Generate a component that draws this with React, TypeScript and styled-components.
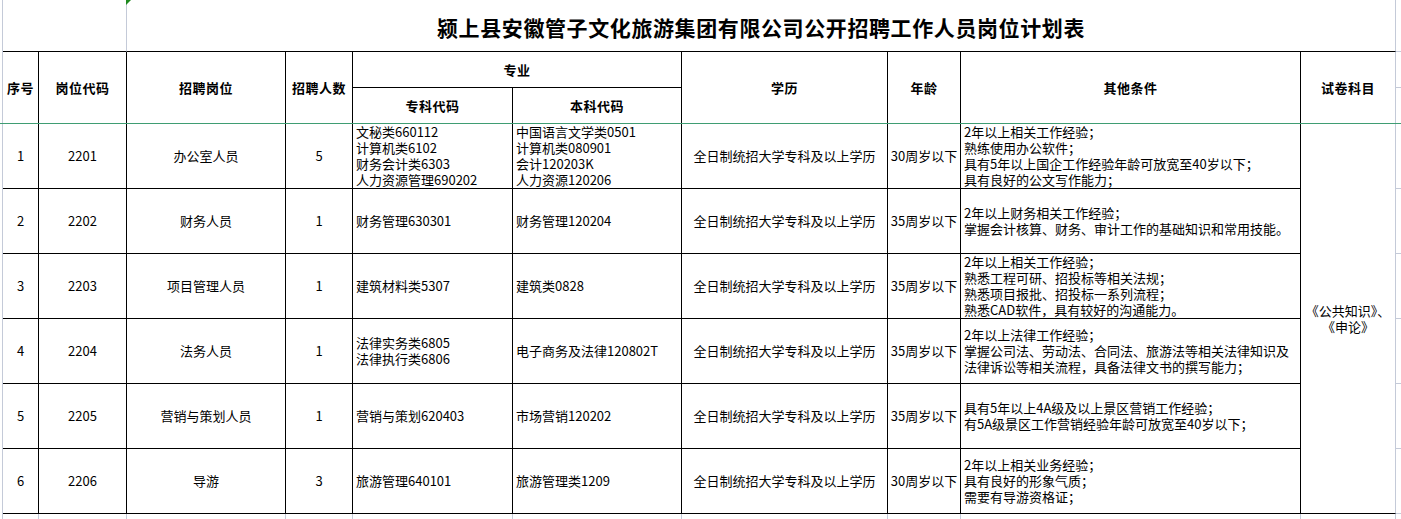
import React from 'react'
import styled, { createGlobalStyle } from 'styled-components'

const INK = '#000'
const GRID = '#c4cad8'
const FREEZE = '#3f9d73'

type Edge = 'ink' | 'grid' | 'none'

const edge = (side: 'right' | 'bottom', e: Edge = 'ink') =>
  e === 'none' ? `border-${side}: none;` : `border-${side}: 1px solid ${e === 'ink' ? INK : GRID};`

// column widths, each including its 1px right border
const COLUMNS = '36px 88px 159px 67px 160px 169px 206px 73px 340px 95px 5px'

const GlobalStyle = createGlobalStyle`
  html, body {
    margin: 0;
    padding: 0;
    background: #fff;
  }
  body {
    font-family: 'Noto Sans CJK SC', 'Liberation Sans', sans-serif;
    color: #000;
  }
`

const Sheet = styled.div`
  width: 1401px;
  height: 519px;
  overflow: hidden;
`

const FrozenPane = styled.div`
  border-bottom: 1px solid ${FREEZE};
`

const Grid = styled.div<{ $rows: string }>`
  display: grid;
  grid-template-columns: ${COLUMNS};
  grid-template-rows: ${(p) => p.$rows};
  margin-left: 2px;
  border-left: 1px solid ${GRID};
`

const Cell = styled.div<{
  $col?: number
  $row?: number
  $right?: Edge
  $bottom?: Edge
  $align?: 'center' | 'left'
}>`
  box-sizing: border-box;
  grid-column: span ${(p) => p.$col ?? 1};
  grid-row: span ${(p) => p.$row ?? 1};
  ${(p) => edge('right', p.$right)}
  ${(p) => edge('bottom', p.$bottom)}
  display: flex;
  flex-direction: column;
  justify-content: center;
  align-items: ${(p) => (p.$align === 'left' ? 'flex-start' : 'center')};
  padding: 0 ${(p) => (p.$align === 'left' ? '3px' : '0')};
  font-size: 13px;
  line-height: 16px;
  white-space: nowrap;
  overflow: hidden;
`

const HeadCell = styled(Cell)`
  font-weight: 700;
  letter-spacing: 0.5px;
`

const TitleCell = styled(Cell)`
  position: relative;
  padding-top: 3px;
  font-size: 21px;
  font-weight: 700;
  letter-spacing: 0.6px;
  line-height: 26px;
  overflow: visible;

  &::before {
    content: '';
    position: absolute;
    left: -1px;
    top: 0;
    border-top: 5px solid #1f8a1f;
    border-right: 5px solid transparent;
  }
`

const Line = styled.span`
  display: block;
`

type Post = {
  no: string
  code: string
  post: string
  count: string
  junior: string[]
  bachelor: string[]
  edu: string
  age: string
  other: string[]
}

const posts: Post[] = [
  {
    no: '1',
    code: '2201',
    post: '办公室人员',
    count: '5',
    junior: ['文秘类660112', '计算机类6102', '财务会计类6303', '人力资源管理690202'],
    bachelor: ['中国语言文学类0501', '计算机类080901', '会计120203K', '人力资源120206'],
    edu: '全日制统招大学专科及以上学历',
    age: '30周岁以下',
    other: [
      '2年以上相关工作经验；',
      '熟练使用办公软件；',
      '具有5年以上国企工作经验年龄可放宽至40岁以下；',
      '具有良好的公文写作能力；',
    ],
  },
  {
    no: '2',
    code: '2202',
    post: '财务人员',
    count: '1',
    junior: ['财务管理630301'],
    bachelor: ['财务管理120204'],
    edu: '全日制统招大学专科及以上学历',
    age: '35周岁以下',
    other: ['2年以上财务相关工作经验；', '掌握会计核算、财务、审计工作的基础知识和常用技能。'],
  },
  {
    no: '3',
    code: '2203',
    post: '项目管理人员',
    count: '1',
    junior: ['建筑材料类5307'],
    bachelor: ['建筑类0828'],
    edu: '全日制统招大学专科及以上学历',
    age: '35周岁以下',
    other: [
      '2年以上相关工作经验；',
      '熟悉工程可研、招投标等相关法规；',
      '熟悉项目报批、招投标一系列流程；',
      '熟悉CAD软件，具有较好的沟通能力。',
    ],
  },
  {
    no: '4',
    code: '2204',
    post: '法务人员',
    count: '1',
    junior: ['法律实务类6805', '法律执行类6806'],
    bachelor: ['电子商务及法律120802T'],
    edu: '全日制统招大学专科及以上学历',
    age: '35周岁以下',
    other: [
      '2年以上法律工作经验；',
      '掌握公司法、劳动法、合同法、旅游法等相关法律知识及',
      '法律诉讼等相关流程，具备法律文书的撰写能力；',
    ],
  },
  {
    no: '5',
    code: '2205',
    post: '营销与策划人员',
    count: '1',
    junior: ['营销与策划620403'],
    bachelor: ['市场营销120202'],
    edu: '全日制统招大学专科及以上学历',
    age: '35周岁以下',
    other: ['具有5年以上4A级及以上景区营销工作经验；', '有5A级景区工作营销经验年龄可放宽至40岁以下；'],
  },
  {
    no: '6',
    code: '2206',
    post: '导游',
    count: '3',
    junior: ['旅游管理640101'],
    bachelor: ['旅游管理类1209'],
    edu: '全日制统招大学专科及以上学历',
    age: '30周岁以下',
    other: ['2年以上相关业务经验；', '具有良好的形象气质；', '需要有导游资格证；'],
  },
]

const lines = (items: string[]) => items.map((l) => <Line key={l}>{l}</Line>)

export default function App() {
  return (
    <>
      <GlobalStyle />
      <Sheet>
        <FrozenPane>
          <Grid $rows="52px 36px 35px">
            <Cell $col={2} $right="grid" />
            <TitleCell $col={8} $right="grid">
              颍上县安徽管子文化旅游集团有限公司公开招聘工作人员岗位计划表
            </TitleCell>
            <Cell $right="none" $bottom="grid" />

            <HeadCell $row={2} $bottom="none">序号</HeadCell>
            <HeadCell $row={2} $bottom="none">岗位代码</HeadCell>
            <HeadCell $row={2} $bottom="none">招聘岗位</HeadCell>
            <HeadCell $row={2} $bottom="none">招聘人数</HeadCell>
            <HeadCell $col={2}>专业</HeadCell>
            <HeadCell $row={2} $bottom="none">学历</HeadCell>
            <HeadCell $row={2} $bottom="none">年龄</HeadCell>
            <HeadCell $row={2} $bottom="none">其他条件</HeadCell>
            <HeadCell $row={2} $bottom="none" $right="grid">试卷科目</HeadCell>
            <Cell $right="none" $bottom="grid" />

            <HeadCell $bottom="none">专科代码</HeadCell>
            <HeadCell $bottom="none">本科代码</HeadCell>
            <Cell $right="none" $bottom="none" />
          </Grid>
        </FrozenPane>

        <Grid $rows="repeat(6, 65px) 6px">
          {posts.map((p, i) => (
            <React.Fragment key={p.no}>
              <Cell>{p.no}</Cell>
              <Cell>{p.code}</Cell>
              <Cell>{p.post}</Cell>
              <Cell>{p.count}</Cell>
              <Cell $align="left">{lines(p.junior)}</Cell>
              <Cell $align="left">{lines(p.bachelor)}</Cell>
              <Cell>{p.edu}</Cell>
              <Cell>{p.age}</Cell>
              <Cell $align="left">{lines(p.other)}</Cell>
              {i === 0 && (
                <Cell $row={posts.length} $right="grid">
                  <Line>《公共知识》、</Line>
                  <Line>《申论》</Line>
                </Cell>
              )}
              <Cell $right="none" $bottom="grid" />
            </React.Fragment>
          ))}
          {Array.from({ length: 10 }, (_, i) => (
            <Cell key={i} $right="grid" $bottom="none" />
          ))}
          <Cell $right="none" $bottom="none" />
        </Grid>
      </Sheet>
    </>
  )
}
